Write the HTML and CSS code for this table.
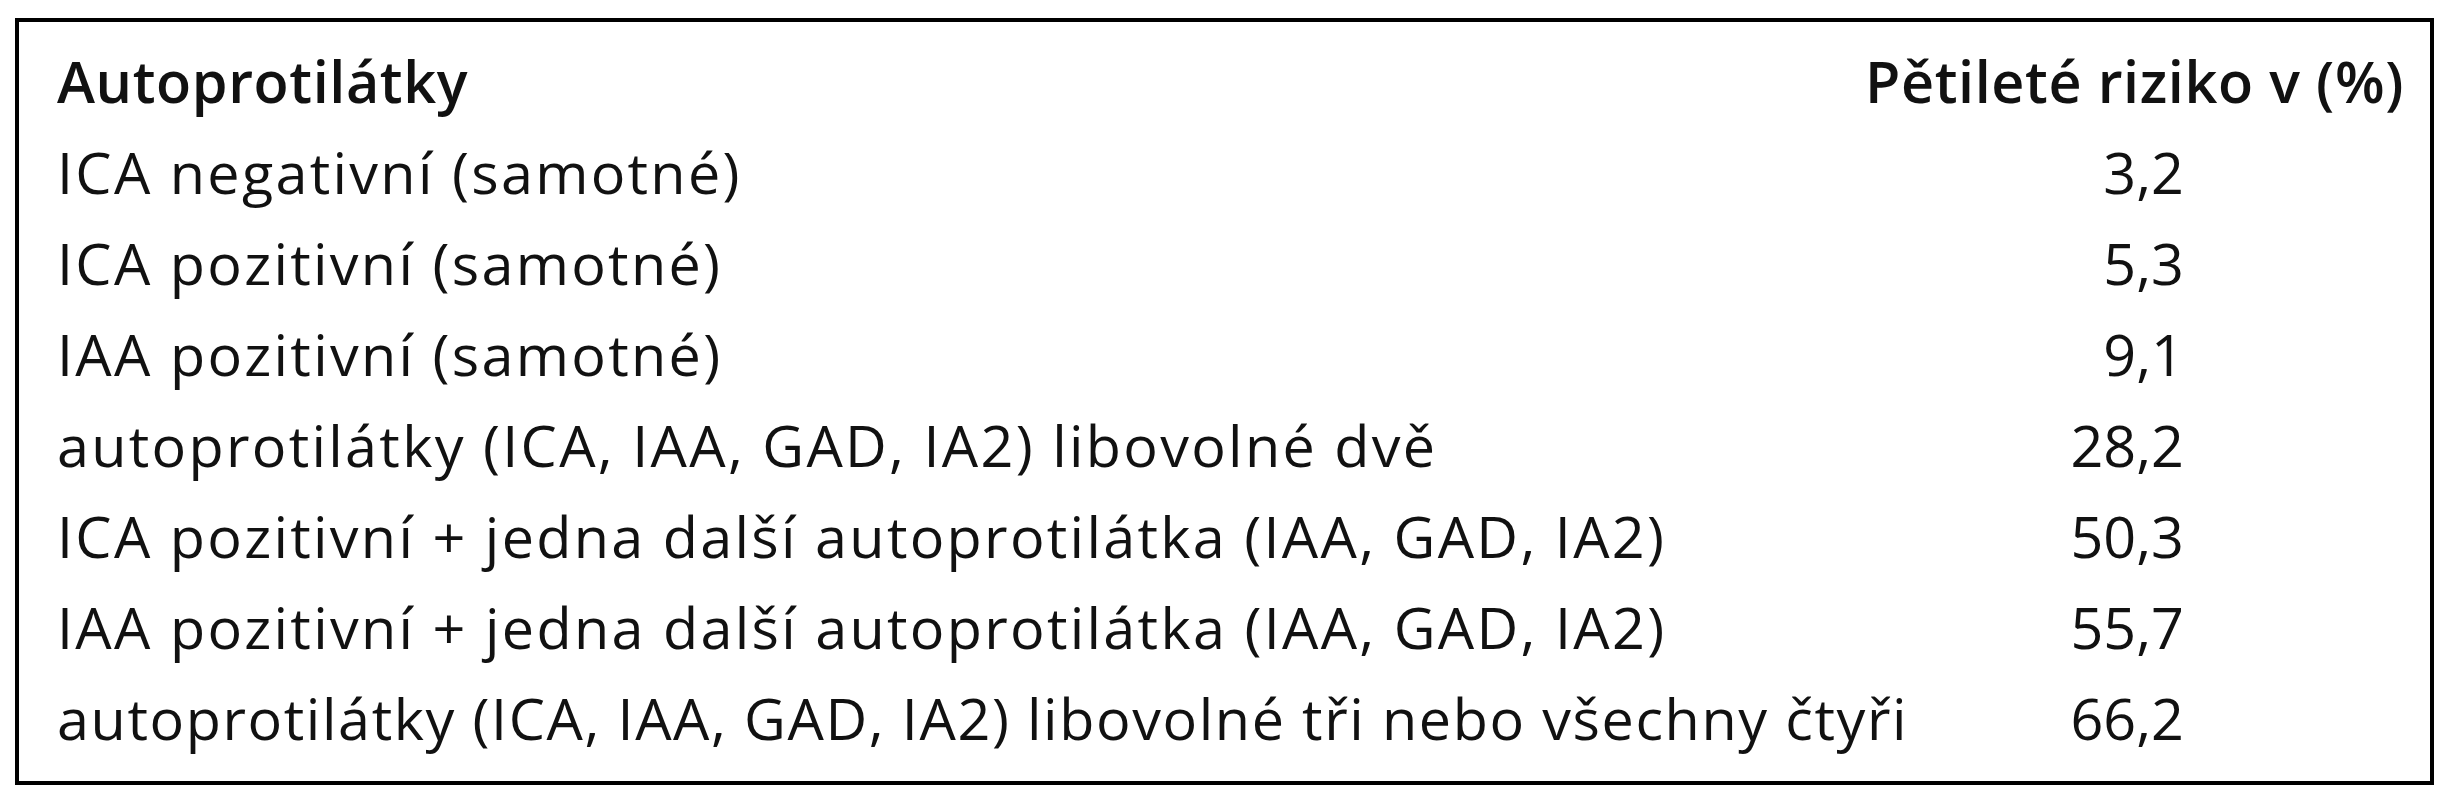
FILE: index.html
```
<!DOCTYPE html>
<html lang="cs">
<head>
<meta charset="utf-8">
<title>Autoprotilátky</title>
<link rel="stylesheet" href="styles.css">
</head>
<body>
<div class="frame">
  <div class="row head">
    <div class="label">Autoprotilátky</div>
    <div class="value">Pětileté riziko v (%)</div>
  </div>
  <div class="row"><div class="label">ICA negativní (samotné)</div><div class="num">3,2</div></div>
  <div class="row"><div class="label">ICA pozitivní (samotné)</div><div class="num">5,3</div></div>
  <div class="row"><div class="label">IAA pozitivní (samotné)</div><div class="num">9,1</div></div>
  <div class="row"><div class="label">autoprotilátky (ICA, IAA, GAD, IA2) libovolné dvě</div><div class="num">28,2</div></div>
  <div class="row"><div class="label">ICA pozitivní + jedna další autoprotilátka (IAA, GAD, IA2)</div><div class="num">50,3</div></div>
  <div class="row"><div class="label">IAA pozitivní + jedna další autoprotilátka (IAA, GAD, IA2)</div><div class="num">55,7</div></div>
  <div class="row"><div class="label tight">autoprotilátky (ICA, IAA, GAD, IA2) libovolné tři nebo všechny čtyři</div><div class="num">66,2</div></div>
</div>
</body>
</html>
```
FILE: styles.css
```
html, body {
  margin: 0;
  padding: 0;
  background: #fff;
}
body {
  font-family: "Open Sans", "Noto Sans", sans-serif;
  color: #111;
}
.frame {
  box-sizing: border-box;
  margin: 18px 0 0 15px;
  width: 2419px;
  height: 767px;
  border: 4px solid #000;
  padding: 14px 26px 0 38px;
  font-size: 57.5px;
  line-height: 91px;
  letter-spacing: 2.3px;
}
.row {
  display: flex;
  justify-content: space-between;
  white-space: nowrap;
}
.head {
  font-weight: 600;
  letter-spacing: 0.6px;
}
.tight {
  letter-spacing: 1.6px;
}
.num {
  width: 200px;
  text-align: right;
  margin-right: 220px;
  letter-spacing: 0;
}
```
